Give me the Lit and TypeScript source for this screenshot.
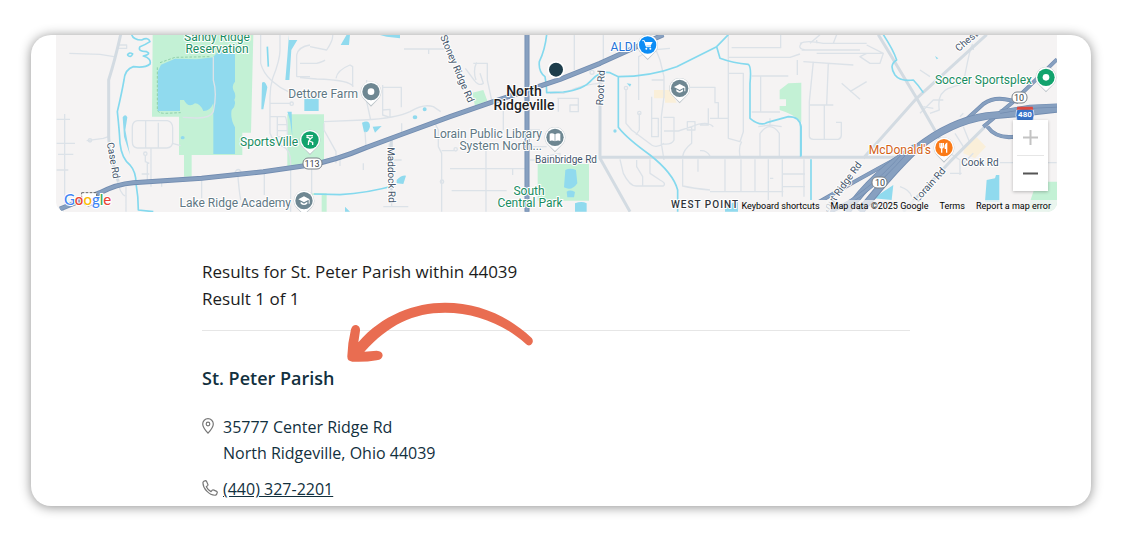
import { LitElement, html, svg, css } from "lit";
import { customElement } from "lit/decorators.js";

type Label = {
  text: string;
  x: number;
  y: number;
  kind: string;
  anchor?: string;
  angle?: number;
};

const LABELS: Label[] = [
  { text: "Sandy Ridge", x: 217, y: 41, kind: "green" },
  { text: "Reservation", x: 217, y: 53, kind: "green" },
  { text: "SportsVille", x: 298, y: 146, kind: "green", anchor: "end" },
  { text: "Dettore Farm", x: 358, y: 98, kind: "slate", anchor: "end" },
  { text: "Lake Ridge Academy", x: 291, y: 207, kind: "slate", anchor: "end" },
  { text: "Lorain Public Library", x: 542, y: 138, kind: "slate", anchor: "end" },
  { text: "System North...", x: 542, y: 150, kind: "slate", anchor: "end" },
  { text: "South", x: 529, y: 195, kind: "green" },
  { text: "Central Park", x: 530, y: 207, kind: "green" },
  { text: "North", x: 524, y: 96, kind: "city" },
  { text: "Ridgeville", x: 524, y: 110, kind: "city" },
  { text: "ALDI", x: 636, y: 51, kind: "blue", anchor: "end" },
  { text: "Soccer Sportsplex", x: 1032, y: 84, kind: "green", anchor: "end" },
  { text: "McDonald's", x: 931, y: 154, kind: "orange", anchor: "end" },
  { text: "Cook Rd", x: 980, y: 166, kind: "road" },
  { text: "Bainbridge Rd", x: 566, y: 163, kind: "road" },
  { text: "Root Rd", x: 604, y: 88, kind: "road", angle: -87 },
  { text: "Case Rd", x: 110, y: 161, kind: "road", angle: 80 },
  { text: "Stoney Ridge Rd", x: 454, y: 70, kind: "road", angle: 67 },
  { text: "Maddock Rd", x: 388, y: 175, kind: "road", angle: 89 },
  { text: "Chestnut", x: 974, y: 39, kind: "road", angle: -40 },
  { text: "Chestnut Ridge Rd", x: 838, y: 198, kind: "road", angle: -54 },
  { text: "Lorain Rd", x: 932, y: 187, kind: "road", angle: -48 },
  { text: "WEST POINT", x: 671, y: 208, kind: "area", anchor: "start" },
];

const GLYPHS = {
  dot: svg`<circle r="10" fill="#fff"></circle>`,
  school: svg`<path d="M-17 -4 L0 -13 L17 -4 L0 5Z M-10 3 L0 9 L10 3 V9 Q0 17 -10 9Z M14 -3 H17 V9 H14Z" fill="#fff"></path>`,
  book: svg`<path d="M-16 -11 Q-7 -14 -1 -9 V12 Q-8 8 -16 11Z M16 -11 Q7 -14 1 -9 V12 Q8 8 16 11Z" fill="#fff"></path>`,
  sport: svg`<path d="M-11 -13 H9 M-6 -8 L1 -3 L-4 4 L-5 15 M0 -3 L8 -9 M-2 3 L8 7 V15" fill="none" stroke="#fff" stroke-width="4"></path><circle cx="-8" cy="-8" r="3" fill="#fff"></circle>`,
  cart: svg`<path d="M-16 -13 H-10 L-4 5 H10" fill="none" stroke="#fff" stroke-width="3"></path><path d="M-9 -9 H15 L9 2 H-5Z" fill="#fff"></path><circle cx="-4" cy="11" r="3" fill="#fff"></circle><circle cx="8" cy="11" r="3" fill="#fff"></circle>`,
  food: svg`<path d="M-12 -14 V-5 Q-12 1 -7 1 Q-2 1 -2 -5 V-14 M-7 -14 V15 M8 15 V-12 Q2 -8 4 2 H8" fill="none" stroke="#fff" stroke-width="4"></path>`,
};

const PINS = [
  { x: 963, y: 185, color: "#6e8792", glyph: GLYPHS.dot },
  { x: 780, y: 330, color: "#12a36d", glyph: GLYPHS.sport },
  { x: 762, y: 512, color: "#6e8792", glyph: GLYPHS.school },
  { x: 1515, y: 322, color: "#6e8792", glyph: GLYPHS.book },
  { x: 1889, y: 175, color: "#6e8792", glyph: GLYPHS.school },
  { x: 1793, y: 45, color: "#0c8df5", glyph: GLYPHS.cart },
  { x: 2682, y: 353, color: "#fa7a17", glyph: GLYPHS.food },
  { x: 2988, y: 142, color: "#12a36d", glyph: GLYPHS.dot },
];

@customElement("area-map")
export class AreaMap extends LitElement {
  static styles = css`
    :host {
      display: block;
      position: relative;
      overflow: hidden;
      border-radius: 0 0 10px 10px;
      background: #f5f3f3;
      font-family: Roboto, "Liberation Sans", sans-serif;
    }
    .canvas { display: block; width: 100%; height: 177px; }
    .land { fill: #c3f1d5; }
    .sand { fill: #faefd9; }
    .water { fill: #90daee; }
    .stream { fill: none; stroke: #84d9ee; stroke-width: 5; stroke-linejoin: round; }
    .minor { fill: none; stroke: #dce2e8; stroke-width: 4; stroke-linejoin: round; }
    .street { fill: none; stroke: #d3dbe2; stroke-width: 9; stroke-linejoin: round; }
    .trail { fill: none; stroke: #8fcfa9; stroke-width: 3; stroke-dasharray: 8 5; }
    .edge, .fill { fill: none; stroke-linejoin: round; }
    .edge { stroke: #728cb0; stroke-width: 15; }
    .fill { stroke: #87a0c0; stroke-width: 10; }
    .edge.wide { stroke-width: 23; }
    .fill.wide { stroke-width: 18; }
    .edge.slim { stroke-width: 12; }
    .fill.slim { stroke-width: 8; }
    .label {
      text-anchor: middle;
      paint-order: stroke;
      stroke: #fff;
      stroke-width: 2px;
      stroke-linejoin: round;
      font-size: 12px;
    }
    .green { fill: #198c5f; }
    .slate { fill: #607783; }
    .blue { fill: #2472d8; }
    .orange { fill: #d35f16; }
    .city { fill: #202124; font-size: 14px; font-weight: 500; }
    .road { fill: #45566b; font-size: 10px; }
    .area { fill: #30343a; font-size: 10px; font-weight: 500; letter-spacing: 1px; }
    .start { text-anchor: start; }
    .end { text-anchor: end; }
    .shield { fill: #fff; stroke: #7b8288; stroke-width: 1px; }
    .number { fill: #3c4043; font-size: 9px; text-anchor: middle; }
    .interstate { fill: #fff; font-size: 8px; font-weight: 700; text-anchor: middle; }
    .logo {
      font: 500 15px Lato, "Liberation Sans", sans-serif;
      paint-order: stroke;
      stroke: #fff;
      stroke-width: 2px;
    }
    .g-blue { fill: #4285f4; }
    .g-red { fill: #ea4335; }
    .g-yellow { fill: #fbbc04; }
    .g-green { fill: #34a853; }
    .zoom {
      position: absolute;
      right: 9px;
      bottom: 21px;
      width: 35px;
      display: grid;
      background: #fff;
      box-shadow: 0 1px 3px rgba(0, 0, 0, 0.25);
    }
    .zoom button {
      height: 35px;
      padding: 0;
      border: 0;
      background: none;
      display: grid;
      place-items: center;
      color: #555;
    }
    .zoom button[disabled] { color: #c3c3c3; }
    .rule { height: 1px; margin: 0 4px; background: #e6e6e6; }
    .legal {
      position: absolute;
      right: 0;
      bottom: 0;
      height: 12px;
      display: flex;
      font-size: 9px;
      line-height: 12px;
      color: #000;
      white-space: nowrap;
      background: rgba(245, 245, 245, 0.75);
    }
    .legal > * { padding: 0 6px 0 5px; }
    .legal button {
      border: 0;
      background: #f5f3f3;
      font: inherit;
      color: inherit;
      padding-left: 3px;
    }
    .legal a { color: inherit; text-decoration: none; }
  `;

  private label(l: Label) {
    const turn = l.angle ? `rotate(${l.angle} ${l.x} ${l.y})` : "";
    return svg`<text class="label ${l.kind} ${l.anchor ?? ""}" x=${l.x} y=${l.y} transform=${turn}>${l.text}</text>`;
  }

  private pin(p: (typeof PINS)[number]) {
    return svg`<g transform="translate(${p.x} ${p.y})">
      <path d="M0 45 L-20 24 A31 31 0 1 1 20 24Z" fill="#bcc4c9"></path>
      <path d="M0 41 L-19 23 A30 30 0 1 1 19 23Z" fill="#fff"></path>
      <circle r="26" fill=${p.color}></circle>
      ${p.glyph}
    </g>`;
  }

  private highway(d: string, size = "") {
    return svg`<path class="edge ${size}" d=${d}></path><path class="fill ${size}" d=${d}></path>`;
  }

  render() {
    return html`
      <svg class="canvas" viewBox="56 35 1001 177" preserveAspectRatio="xMidYMid slice" role="img" aria-label="Map of North Ridgeville">
        <g transform="translate(50 30) scale(0.33333)">
          <path class="land" d="M308 14 H610 L603 308 H577 V375 H425 V440 H402 V375 H387 V260 H306Z M712 253 H822 V398 L712 412Z M1267 188 L1300 180 L1312 212 L1275 228Z M1463 402 H1617 V512 H1463Z M750 490 H830 V545 H815 V495 H750Z M2189 180 L2215 160 L2254 158 V275 Q2225 250 2189 240 V228 H2208 V208 H2189Z M2960 455 H3021 V545 H2930Z"></path>
          <path class="sand" d="M1812 180 H1862 L1880 218 H1845 V205 H1812Z M2745 345 L2780 322 L2808 350 L2775 385 L2740 370Z"></path>
          <path class="water" d="M333 104 L375 86 L440 88 L490 82 V220 Q480 244 460 243 Q450 220 435 220 Q415 236 402 210 L390 210 V243 H323 V125Z M500 70 Q515 55 530 65 L555 72 V155 Q545 165 550 180 Q560 195 553 210 Q560 225 545 240 Q540 265 555 292 V372 H490 V80Z M392 323 a6 5 0 1 0 12 0 a6 5 0 1 0 -12 0
            M717 14 V30 H742 L724 60 L718 150 H706 L712 80Z M636 158 Q645 150 652 172 L640 238 H634Z M218 262 Q226 250 232 262 L226 300 L240 375 L222 320Z M763 206 H806 V243 H763Z M712 245 H725 L727 320 L720 270Z M872 45 L890 14 H900 L897 45Z M986 14 H1050 V25 L1010 20Z M936 278 Q960 268 960 290 Q955 310 942 306Z M968 290 L995 288 L975 308Z M1088 262 a7 6 0 1 0 14 0 a7 6 0 1 0 -14 0 M1118 238 a6 6 0 1 0 12 0 a6 6 0 1 0 -12 0
            M1040 450 Q1055 435 1068 437 L1060 462 L1040 460Z M885 530 L900 545 H885Z
            M1546 420 Q1560 412 1578 420 L1582 460 Q1565 485 1542 472Z M1550 485 Q1560 478 1575 486 L1572 502 H1552Z M1575 520 Q1595 512 1610 520 V545 H1575Z M1730 160 L1744 162 L1740 170Z M1690 303 a5 5 0 1 0 10 0 a5 5 0 1 0 -10 0 M2025 525 L2060 515 L2110 545 H2025Z
            M2810 450 L2835 445 L2838 435 H2848 V515 H2805Z M2470 505 L2530 465 L2525 510Z M2655 78 L2665 85 L2660 88Z M2250 270 L2256 290 V380 H2250Z"></path>
          <path class="trail" d="M322 112 V240 Q325 250 345 250 L392 248 M330 98 L375 82 L480 80"></path>

          <path class="minor" d="M490 80 V150 Q502 190 490 245 Q480 265 440 264 L398 262
            M58 70 L150 73 L192 80 M205 45 H230 V55 H205 M44 252 V520 M20 268 H60 M20 340 H75 M24 373 H70 M20 420 H55 M40 530 V560 M110 332 L160 325 L175 320
            M262 272 H352 Q368 275 368 295 V338 Q366 353 350 354 H262 Q247 352 247 335 V290 Q248 274 262 272 M287 274 V353 M325 278 V353 M367 340 L392 347
            M303 355 V470 M286 376 V395 L298 400 M292 400 V450 M275 432 H298 M455 448 V505 M563 430 Q567 480 572 510 M643 420 V495 M228 470 V545 M203 455 Q210 490 225 498 M335 455 V470 M556 438 V425 Q565 412 573 425 V438
            M632 14 V100 Q640 130 665 152 T715 185 M690 14 V60 Q690 90 668 145 Q660 170 660 200 V310 Q670 340 700 350 Q722 360 722 400 V545 M660 220 H722 M660 260 H705 Q712 265 712 320 H682 V262 M682 284 H710 M682 302 H710
            M740 140 V75 Q745 50 780 45 M740 140 H780
            M750 100 H800 Q820 95 825 90 M780 50 L830 60 Q850 30 848 14 M750 143 L800 147 Q900 150 910 170 M858 145 Q862 120 900 105 L908 110 V170 M1062 57 H1190 M1136 57 V72
            M950 150 V215 L962 270 M998 165 V255 L1020 262 M1000 172 H1054 V232 M998 240 L1020 238 V262
            M822 275 L940 270 Q1040 265 1080 245 Q1120 220 1150 230 L1172 245 M822 280 V300 L858 365 V400 M1055 280 V308 M945 305 L948 350 M870 385 V408 M940 400 V420
            M1018 340 V390 H1055 M1008 400 H1035 M1025 470 V530 H1000 M1025 530 H1075 M785 415 V500
            M1150 270 L1165 300 V350 L1175 370 V545 M1175 362 H1212 M1200 416 H1430 M1205 482 H1370 M1308 355 V545 M1388 416 V435
            M1246 115 L1272 150 Q1285 170 1300 160 L1290 130 M1270 100 H1312 V150 L1326 215 M1280 97 Q1268 120 1278 150
            M1360 225 V300 M1440 300 H1470 M1440 350 H1490 M1440 390 H1470
            M1500 190 H1540 Q1600 160 1660 160 M1522 205 H1585 V245 H1560 V225 H1585 M1525 205 V245 M1480 380 L1530 370 V400
            M1573 14 V120 M1660 14 V90 M1766 100 V80 Q1810 60 1815 20 M1766 100 V210 M1800 14 L1830 90 L1842 140 V200 L1834 260 V340 L1842 390 M1805 60 L1860 55 M1805 150 H1840
            M1728 178 V280 L1745 300 L1805 345 Q1820 355 1842 340 M1768 250 V300 L1758 315 M1805 200 V320 H1825 V265 H1805 M1840 262 H1872 V330 Q1865 345 1840 342 M1842 303 H1885 L1925 290 Q1970 270 1990 290 M1925 290 V340 Q1900 360 1898 380 M1912 275 V300 H1935 V275Z
            M1920 172 H1995 V218 H2005 V265 H1980 M1975 235 V285 H1950 M1995 265 H2035 M2035 14 V325 L2070 335 L2080 305 V130 H2035 M2045 53 H2192 V14 M2035 95 V82 H2220 L2250 72 M2242 90 V135 M2105 138 H2215 M2132 138 V248 M2105 246 H2190 M2255 40 Q2240 55 2265 60 M2300 40 V30
            M2130 380 V310 Q2160 270 2188 310 V380 M2125 290 L2160 285 L2195 290 M2160 285 V265 M2075 335 Q2065 350 2070 380 M1950 362 Q1970 360 1980 378
            M1710 388 L1720 430 Q1740 470 1760 468 H1840 Q1850 460 1830 450 L1800 430 V388 M1760 390 V410 L1778 440 V468 M1898 388 V468 Q1930 475 1980 480 M1944 388 V425 M1980 485 H2200 M2025 388 V485 M2073 388 V485 M2115 388 V485 M2155 388 V520 M2197 388 V500 M2197 432 H2265 M2197 470 H2265 M2262 388 V500 M2160 445 H2170
            M2250 40 Q2270 30 2320 40 H2450 M2255 60 H2430 M2300 70 H2500 M2310 14 L2280 40 M2360 14 L2350 40 M2450 45 L2500 70 L2490 100 H2460 L2430 80 L2450 70 M2260 95 L2410 105 M2290 95 L2278 215 V320 Q2280 328 2290 328 H2365 Q2374 325 2374 315 V277 H2358 M2335 98 L2330 225 H2280 M2330 225 H2350 M2323 225 V328 M2375 160 L2430 208 M2400 185 L2450 155
            M2610 120 L2640 140 M2610 250 L2650 210 H2680 M2620 230 L2650 235 M2770 60 Q2770 0 2740 160 L2695 175 Q2660 190 2668 240 L2640 250
            M2740 290 L2760 340 M2715 310 L2740 350 M2740 250 L2730 260 M2700 430 H2735 M2850 398 H3020 M2740 400 L2770 370 M2550 470 Q2580 480 2585 500 M2700 370 L2730 390 V435"></path>
          <g class="minor"><circle cx="120" cy="331" r="5"></circle><circle cx="286" cy="371" r="5"></circle><circle cx="725" cy="221" r="5"></circle><circle cx="1176" cy="455" r="5"></circle><circle cx="1217" cy="358" r="5"></circle><circle cx="1728" cy="174" r="5"></circle><circle cx="1768" cy="249" r="5"></circle><circle cx="1626" cy="127" r="6"></circle></g>

          <path class="street" d="M212 14 Q195 90 176 150 V320 Q178 370 205 455 M1024 325 V480 M1650 130 V385 L1740 545 M1650 382 H2540 M2485 14 L2600 205 L2680 345 M2810 14 L2600 205 L2440 385 M2805 290 L2700 395 L2560 545"></path>

          <path class="stream" d="M245 14 Q250 30 275 30 Q295 20 300 35 Q285 45 270 50 Q262 65 290 65 Q305 72 280 78 Q305 85 300 102 Q285 115 250 110 Q225 118 222 150 Q215 190 202 245 Q208 300 210 340 Q215 385 240 405 Q258 425 258 460 Q265 500 265 540 L310 545 M232 75 Q238 65 248 72 Q242 85 232 75
            M652 50 L655 110 M792 492 L870 494 Q950 490 1040 465 M1490 14 Q1485 60 1468 95 Q1465 125 1485 140 Q1490 170 1490 188 L1540 186 Q1600 180 1625 150 Q1650 122 1680 128 L1705 140 Q1800 140 1880 110 L2000 50 L2035 14 M2000 50 L2010 85 Q2050 100 2095 103 Q2105 110 2100 160 V265 Q2130 290 2150 278 L2215 260 Q2250 260 2252 290 V380 M1705 140 V292 Q1730 325 1800 375 Q1870 430 1883 480 V545
            M2500 14 Q2530 60 2540 90 Q2515 105 2535 135 Q2550 155 2590 150 Q2605 165 2620 188 M2283 388 V545"></path>

          ${this.highway("M1431 14 V545")}
          ${this.highway("M30 537 L150 488 Q200 462 250 458 L455 445 L640 425 L780 405 Q860 390 950 352 L1050 315 L1200 260 L1330 215 L1530 148 L1650 100 L1750 55 L1840 14")}
          ${this.highway("M3021 88 L2890 215 L2800 290", "slim")}
          ${this.highway("M2750 268 L2800 222 Q2830 202 2865 208 L2905 215", "slim")}
          ${this.highway("M2812 290 Q2840 328 2895 320 L2960 310", "slim")}
          ${this.highway("M2300 520 Q2420 450 2560 375", "slim")}
          ${this.highway("M2390 545 Q2470 430 2600 350", "wide")}
          ${this.highway("M2430 545 Q2530 420 2600 355 Q2700 275 2810 258 L2900 250 L3025 236", "wide")}
          ${this.highway("M2340 545 Q2450 500 2560 375", "slim")}
          ${this.highway("M2850 245 L2940 230 L3025 226", "slim")}

          <path d="M95 488 H140 V512 Q130 525 117 528 Q100 525 95 510Z" fill="#fff" stroke="#666" stroke-width="3" stroke-dasharray="8 4"></path>
        </g>

        ${LABELS.map((l) => this.label(l))}

        <g transform="translate(50 30) scale(0.33333)">
          ${PINS.map((p) => this.pin(p))}
          <circle cx="1518" cy="119" r="26" fill="#fff"></circle>
          <circle cx="1518" cy="119" r="21" fill="#1d3d4b"></circle>
          <path d="M2900 240 Q2925 230 2950 240 Q2960 275 2925 296 Q2890 275 2900 240Z" fill="#3873c8" stroke="#fff" stroke-width="2"></path>
          <path d="M2902 230 H2948 L2950 239 H2900Z" fill="#dd473d"></path>
        </g>
        <rect class="shield" x="303" y="158" width="19" height="11" rx="5"></rect>
        <text class="number" x="312" y="167">113</text>
        <rect class="shield" x="1012" y="92" width="15" height="11" rx="5"></rect>
        <text class="number" x="1019" y="101">10</text>
        <rect class="shield" x="872" y="177" width="15" height="11" rx="5"></rect>
        <text class="number" x="880" y="186">10</text>
        <text class="interstate" x="1025" y="117">480</text>
        <text class="logo" x="64" y="205"><tspan class="g-blue">G</tspan><tspan class="g-red">o</tspan><tspan class="g-yellow">o</tspan><tspan class="g-blue">g</tspan><tspan class="g-green">l</tspan><tspan class="g-red">e</tspan></text>
      </svg>
      <div class="zoom">
        <button type="button" aria-label="Zoom in" disabled>
          <svg width="15" height="15" viewBox="0 0 15 15"><path d="M0 7.5H15M7.5 0V15" stroke="currentColor" stroke-width="2"></path></svg>
        </button>
        <div class="rule"></div>
        <button type="button" aria-label="Zoom out">
          <svg width="15" height="15" viewBox="0 0 15 15"><path d="M0 7.5H15" stroke="currentColor" stroke-width="2"></path></svg>
        </button>
      </div>
      <div class="legal">
        <button type="button">Keyboard shortcuts</button>
        <span>Map data ©2025 Google</span>
        <a href="#terms">Terms</a>
        <a href="#report">Report a map error</a>
      </div>
    `;
  }
}

@customElement("app-root")
export class AppRoot extends LitElement {
  static styles = css`
    :host {
      display: block;
      padding: 35px 31px 32px;
      background: #fff;
      font-family: "Open Sans", "Noto Sans", sans-serif;
      color: #1c1c1c;
    }
    .card {
      overflow: hidden;
      border-radius: 20px;
      background: #fff;
      box-shadow: 0 1px 12px rgba(0, 0, 0, 0.45);
    }
    .map { margin: 0 34px 0 25px; }
    .results {
      position: relative;
      padding: 46px 181px 4px 171px;
    }
    .summary {
      margin: 0;
      padding-bottom: 18px;
      border-bottom: 1px solid #e6e6e6;
      font-size: 17px;
      line-height: 27px;
    }
    .name {
      margin: 34px 0 0;
      font-size: 18px;
      line-height: 26px;
      font-weight: 600;
      color: #12303e;
    }
    .contact {
      margin: 23px 0 0;
      display: grid;
      grid-template-columns: 15px 1fr;
      column-gap: 6px;
      row-gap: 10px;
      font-size: 16px;
      line-height: 26px;
      font-style: normal;
      color: #12303e;
    }
    .contact a { color: inherit; }
    .icon { display: block; margin-top: 4px; }
    .arrow {
      position: absolute;
      left: 314px;
      top: 89px;
    }
  `;

  render() {
    return html`
      <main class="card">
        <area-map class="map"></area-map>
        <section class="results">
          <p class="summary">Results for St. Peter Parish within 44039<br />Result 1 of 1</p>
          <h2 class="name">St. Peter Parish</h2>
          <address class="contact">
            <svg class="icon" width="12" height="16" viewBox="0 0 12 16" fill="none" stroke="#777" stroke-width="1.2">
              <path d="M6 15.2Q0.7 9.3 0.7 5.9A5.3 5.2 0 0 1 11.3 5.9Q11.3 9.3 6 15.2Z"></path>
              <circle cx="6" cy="6" r="1.8"></circle>
            </svg>
            <div>35777 Center Ridge Rd<br />North Ridgeville, Ohio 44039</div>
            <svg class="icon" width="16" height="16" viewBox="0 0 16 16" fill="none" stroke="#777" stroke-width="1.2" stroke-linejoin="round">
              <path d="M1 2.2Q1.5 1 3.5 0.7Q4.2 0.7 4.5 1.3L5.9 4.4Q6.1 5.1 5.6 5.6L4.3 6.8Q5.8 10 9 11.6L10.3 10.1Q10.8 9.6 11.4 9.9L14.7 11.4Q15.4 11.8 15.3 12.4Q14.9 14.7 13.6 15.2Q9 15.6 4.8 11.2Q0.6 6.8 1 2.2Z"></path>
            </svg>
            <div><a href="tel:+14403272201">(440) 327-2201</a></div>
          </address>
          <svg class="arrow" width="190" height="63" viewBox="450 153 570 189" aria-hidden="true">
            <path fill="#e96d51" d="M490 277 C560 195 660 158 750 158 C850 158 935 195 1010 264 Q1018 275 1008 284 Q1000 290 992 281 C925 222 840 188 750 188 C655 188 580 225 508 305 L545 302 Q562 303 563 316 Q562 330 545 331 Q510 337 472 335 Q456 334 457 318 Q458 280 468 238 Q472 224 484 225 Q496 228 495 242 Z"></path>
          </svg>
        </section>
      </main>
    `;
  }
}
